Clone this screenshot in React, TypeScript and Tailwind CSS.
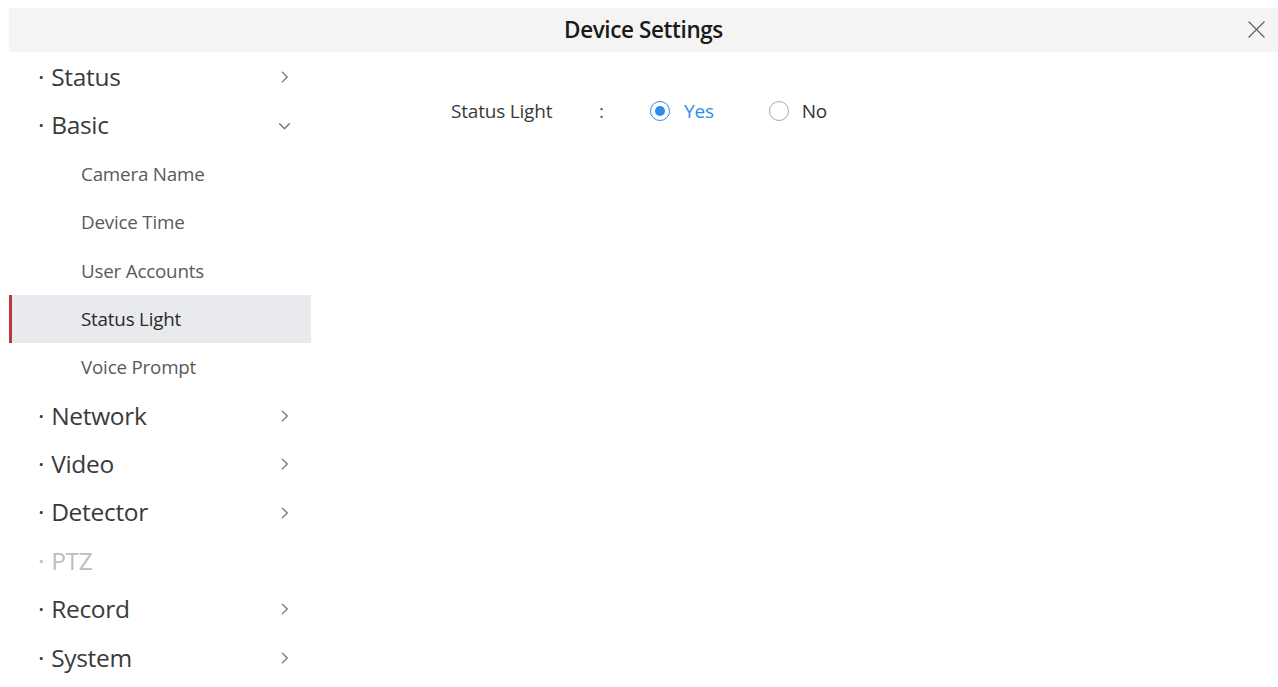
import React from 'react';

const ChevronRight = () => (
  <svg viewBox="0 0 12 12" className="w-[13px] h-[13px]" fill="none" stroke="currentColor" strokeWidth="1.3" strokeLinecap="round" strokeLinejoin="round">
    <path d="M4 1.5l4.5 4.5L4 10.5" />
  </svg>
);

const ChevronDown = () => (
  <svg viewBox="0 0 12 12" className="w-[13px] h-[13px]" fill="none" stroke="currentColor" strokeWidth="1.3" strokeLinecap="round" strokeLinejoin="round">
    <path d="M1.5 4l4.5 4.5L10.5 4" />
  </svg>
);

type NavItem = { label: string; chevron?: 'right' | 'down'; disabled?: boolean; sub?: boolean; active?: boolean };

const items: NavItem[] = [
  { label: 'Status', chevron: 'right' },
  { label: 'Basic', chevron: 'down' },
  { label: 'Camera Name', sub: true },
  { label: 'Device Time', sub: true },
  { label: 'User Accounts', sub: true },
  { label: 'Status Light', sub: true, active: true },
  { label: 'Voice Prompt', sub: true },
  { label: 'Network', chevron: 'right' },
  { label: 'Video', chevron: 'right' },
  { label: 'Detector', chevron: 'right' },
  { label: 'PTZ', disabled: true },
  { label: 'Record', chevron: 'right' },
  { label: 'System', chevron: 'right' },
];

export default function App() {
  return (
    <div className="w-[1278px] h-[687px] bg-white pl-[9px] pt-[8px] overflow-hidden" style={{ fontFamily: '"Open Sans", "Noto Sans", sans-serif' }}>
      {/* Title bar */}
      <div className="relative h-[44px] bg-[#f4f4f4] flex items-center justify-center">
        <span className="text-[22.5px] font-semibold text-[#1a1a1a] tracking-[-0.4px]">Device Settings</span>
        <button className="absolute right-[12px] top-[12px] text-[#555]">
          <svg viewBox="0 0 20 20" className="w-[19px] h-[19px]" fill="none" stroke="currentColor" strokeWidth="1.4" strokeLinecap="round">
            <path d="M2 2l16 16M18 2L2 18" />
          </svg>
        </button>
      </div>

      <div className="flex">
        {/* Sidebar */}
        <nav className="w-[302px] pt-[1px]">
          {items.map((it) => (
            <div
              key={it.label}
              className={
                'relative h-[48.4px] flex items-center ' +
                (it.active ? 'bg-[#e9eaed] ' : '') +
                (it.sub ? 'pl-[72px] ' : 'pl-[29px] ')
              }
            >
              {it.active && <div className="absolute left-0 top-0 bottom-0 w-[3px] bg-[#c0353d]" />}
              {it.sub ? (
                <span className={'text-[18.8px] tracking-[-0.2px] ' + (it.active ? 'text-[#2a2a2a]' : 'text-[#5a5a5a]')}>{it.label}</span>
              ) : (
                <>
                  <span className={'text-[24.5px] tracking-[-0.3px] ' + (it.disabled ? 'text-[#bdbdbd]' : 'text-[#3a3a3a]')}>
                    <span className="mr-[7px]">·</span>
                    {it.label}
                  </span>
                  {it.chevron && (
                    <span className="absolute left-[269px] top-1/2 -translate-y-1/2 text-[#777] flex">
                      {it.chevron === 'right' ? <ChevronRight /> : <ChevronDown />}
                    </span>
                  )}
                </>
              )}
            </div>
          ))}
        </nav>

        {/* Content */}
        <main className="flex-1 pt-[44px] pl-[140px]">
          <div className="flex items-center h-[30px] text-[19px] tracking-[-0.2px]">
            <span className="w-[148px] text-[#3a3a3a]">Status Light</span>
            <span className="w-[51px] text-[#555]">:</span>
            <label className="flex items-center">
              <span className="w-[20px] h-[20px] rounded-full border-[1.5px] border-[#2d8cf0] flex items-center justify-center">
                <span className="w-[10px] h-[10px] rounded-full bg-[#2d8cf0]" />
              </span>
              <span className="ml-[14px] text-[#2d8cf0]">Yes</span>
            </label>
            <label className="flex items-center ml-[55px]">
              <span className="w-[20px] h-[20px] rounded-full border-[1.5px] border-[#a8a8a8]" />
              <span className="ml-[13px] text-[#333]">No</span>
            </label>
          </div>
        </main>
      </div>
    </div>
  );
}
